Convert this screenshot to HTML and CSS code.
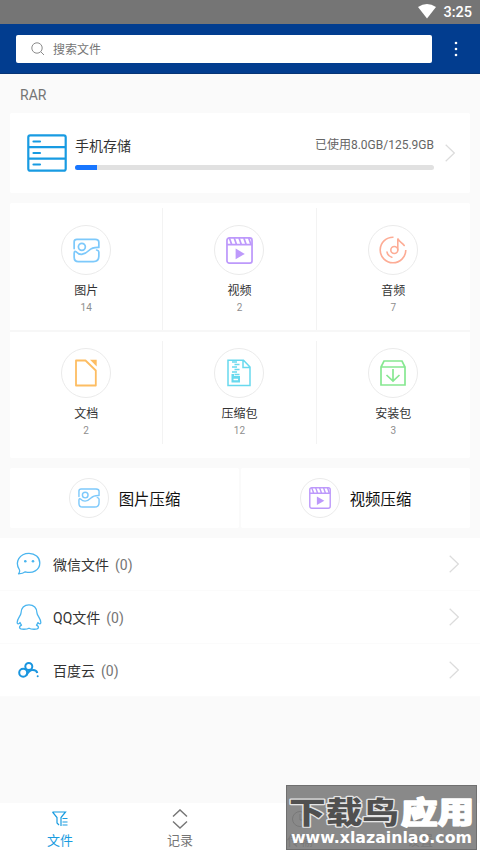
FILE: index.html
```html
<!DOCTYPE html>
<html lang="zh-CN">
<head>
<meta charset="utf-8">
<title>RAR</title>
<link rel="stylesheet" href="styles.css">
</head>
<body>
<svg class="defs" width="0" height="0" aria-hidden="true">
  <symbol id="image" viewBox="0 0 28 28"><g fill="none" stroke="#7dc9fb" stroke-width="1.800" stroke-linecap="round" stroke-linejoin="round"><path d="M1.200 12V5Q1.200 2.500 4 2.500H23Q26.800 2.500 26.800 5.500V10.800Q20 10.500 16.500 14T9 18Q5.500 18 3.500 15.500Q1.200 13.800 1.200 17V21Q1.200 25.500 5.500 25.500H21Q26.800 25.500 26.800 20V15.500Q26.800 14 24.500 13.500"/><circle cx="9.200" cy="10.200" r="3.600"/></g></symbol>
  <symbol id="video" viewBox="0 0 28 28"><g fill="none" stroke="#bd99fb" stroke-width="1.800"><rect x="1" y="1" width="26" height="26" rx="2.500"/><path d="M1 8H27M3.500 1L6 8M8.500 1L11 8M13.500 1L16 8M18.500 1L21 8M23.500 1L26 8"/></g><path d="M10 12L19.500 17.500L10 23Z" fill="#bd99fb"/></symbol>
  <symbol id="chevron" viewBox="0 0 10 18"><path d="M.7.7L9.300 9L.7 17.300" fill="none" stroke="#dcdcdc" stroke-width="1.200"/></symbol>
</svg>

<div class="status">
  <svg width="18" height="15" viewBox="0 0 18 15"><path d="M0 3Q9-3 18 3L9 14.500Z" fill="#fff"/></svg>
  <span>3:25</span>
</div>
<header class="header">
  <div class="search">
    <svg width="14" height="14" viewBox="0 0 14 14" fill="none" stroke="#8b8b8b"><circle cx="6" cy="6" r="5.200"/><path d="M9.800 9.800L13 13"/></svg>
    <span>搜索文件</span>
  </div>
  <svg class="more" width="4" height="16" viewBox="0 0 4 16" fill="#fff"><circle cx="2" cy="2" r="1.300"/><circle cx="2" cy="8" r="1.300"/><circle cx="2" cy="14" r="1.300"/></svg>
</header>

<main>
  <div class="path">RAR</div>
  <section class="card storage">
    <svg width="40" height="38" viewBox="0 0 40 38" fill="none" stroke="#189be2" stroke-width="2.200"><rect x="1.300" y="1.300" width="37.400" height="35.400" rx="2"/><path d="M1 13.200H39M1 24.700H39"/><path d="M6.500 7.500H13M6.500 19H13M6.500 30.500H13" stroke-linecap="round"/></svg>
    <div class="usage">
      <div class="usage-top"><b>手机存储</b><span>已使用8.0GB/125.9GB</span></div>
      <div class="bar"><i></i></div>
    </div>
    <svg class="arrow" width="10" height="18"><use href="#chevron"/></svg>
  </section>

  <section class="card types">
    <div class="row first">
      <div class="type"><div class="disc"><svg width="27" height="27"><use href="#image"/></svg></div><b>图片</b><small>14</small></div>
      <div class="type"><div class="disc"><svg width="27" height="27"><use href="#video"/></svg></div><b>视频</b><small>2</small></div>
      <div class="type"><div class="disc"><svg width="28" height="28" viewBox="0 0 28 28" fill="none" stroke="#fdac95" stroke-width="1.600"><path d="M14.500 1.200A12.800 12.800 0 1 0 26.800 14"/><circle cx="15.300" cy="14" r="3.500"/><path d="M18.800 14V2.500C20 6 23 6.500 25.200 9.500M8 16Q8.500 20 12.800 21.200" stroke-linecap="round"/></svg></div><b>音频</b><small>7</small></div>
    </div>
    <div class="row second">
      <div class="type"><div class="disc"><svg width="24" height="28" viewBox="0 0 24 28"><path d="M2 1.500H11.500L21.800 11.500V26.500H2Z" fill="none" stroke="#fdbd62" stroke-width="1.800" stroke-linejoin="round"/><path d="M16 .7H22.700V7.500Z" fill="#fdbd62"/></svg></div><b>文档</b><small>2</small></div>
      <div class="type"><div class="disc"><svg width="24" height="28" viewBox="0 0 24 28" fill="none" stroke="#68d9ee" stroke-width="1.500"><path d="M1 1.200H16.500L23 8V26.500H1ZM16 1.500V8.500H23"/><path d="M5 3H10M7.500 5.500H12.500M5 8H10M7.500 10.500H12.500M5 13H10M7.500 15.500H12.500" stroke-width="1.700"/><path d="M4.500 15H7V17H13V23.500H4.500Z" fill="#68d9ee" stroke="none"/><path d="M6.500 20.500H11" stroke="#fff"/></svg></div><b>压缩包</b><small>12</small></div>
      <div class="type"><div class="disc"><svg width="26" height="26" viewBox="0 0 26 26" fill="none" stroke="#87e891" stroke-width="1.700"><path d="M1 7L4 1H22L25 7V25H1ZM1 7H25"/><path d="M13 9V21M6.500 15L13 21L19.500 15"/></svg></div><b>安装包</b><small>3</small></div>
    </div>
  </section>

  <section class="compress">
    <div class="card tool"><div class="disc"><svg width="22" height="22"><use href="#image"/></svg></div><span>图片压缩</span></div>
    <div class="card tool"><div class="disc"><svg width="22" height="22"><use href="#video"/></svg></div><span>视频压缩</span></div>
  </section>

  <section class="sources">
    <div class="source">
      <svg width="26" height="26" viewBox="0 0 26 26" fill="none" stroke="#4ab5ef" stroke-width="1.300" stroke-linejoin="round"><path d="M3.300 18.500C-1.500 11 3.500 2.300 13 2.300C19 2.300 23.800 6.500 23.800 12C23.800 19 16.500 23 9.300 20.800C7.500 22.300 5.500 22.800 2.500 22.800Q4.300 20.500 3.300 18.500Z"/><g fill="#4ab5ef" stroke="none"><circle cx="9.300" cy="10.300" r="1.300"/><circle cx="17" cy="10.300" r="1.300"/></g></svg>
      <span>微信文件</span><em>(0)</em><svg class="arrow" width="10" height="18"><use href="#chevron"/></svg>
    </div>
    <div class="source">
      <svg width="26" height="26" viewBox="0 0 26 26" fill="none" stroke="#4ab5ef" stroke-width="1.300" stroke-linejoin="round"><path d="M5 9C5 4 8.300.8 13 .8S21 4 21 9C21 11.500 24.800 14.500 24.800 18.500C24.800 20.500 23 20 22 18.500Q21.800 19.500 20.500 21.200Q23 22.500 22.300 24C21.500 25.700 15 25.500 13 24.200C11 25.500 4.500 25.700 3.700 24Q3 22.500 5.500 21.200Q4.200 19.500 4 18.500C3 20 1.200 20.500 1.200 18.500C1.200 14.500 5 11.500 5 9Z"/></svg>
      <span>QQ文件</span><em>(0)</em><svg class="arrow" width="10" height="18"><use href="#chevron"/></svg>
    </div>
    <div class="source">
      <svg width="26" height="26" viewBox="0 0 26 26" fill="none" stroke="#1995df" stroke-width="2"><circle cx="7.200" cy="15.700" r="4"/><circle cx="12.800" cy="9.500" r="3.500"/><path d="M10.200 18.500Q13.300 13 16.500 13Q20.500 12.800 21.300 16"/><circle cx="21.700" cy="19.200" r="1" fill="#1995df" stroke="none"/></svg>
      <span>百度云</span><em>(0)</em><svg class="arrow" width="10" height="18"><use href="#chevron"/></svg>
    </div>
  </section>
</main>

<nav class="tabs">
  <div class="tab active"><svg width="18" height="20" viewBox="0 0 18 20" fill="none" stroke="currentColor" stroke-width="1.200"><path d="M1.500 3H14.500L10 8.500V17M1.500 3L6 8.500V14L8 16M11.500 9.500H16.500M11.500 13H16.500M11.500 16H16.500"/></svg><span>文件</span></div>
  <div class="tab"><svg width="18" height="20" viewBox="0 0 18 20" fill="none" stroke="currentColor" stroke-width="1.400"><path d="M2 7.500L9 .9L16 7.500M2 12.500L9 19L16 12.500"/></svg><span>记录</span></div>
  <div class="tab"><svg width="18" height="20" viewBox="0 0 18 20" fill="none" stroke="currentColor"><circle cx="9" cy="10" r="7.500"/><path d="M9 5V11H13"/></svg><span>传输</span></div>
  <div class="tab"><svg width="18" height="20" viewBox="0 0 18 20" fill="none" stroke="currentColor"><path d="M9 2L17 6V14L9 18L1 14V6Z"/><circle cx="9" cy="10" r="3"/></svg><span>设置</span></div>
</nav>

<svg class="stamp" width="191" height="65" viewBox="0 0 191 65">
  <rect x=".5" y=".5" width="190" height="64" fill="#777" fill-opacity=".87" stroke="#6f6f6f"/>
  <g class="stamp-name" transform="translate(0 37.500) scale(1 .82)">
    <text class="dark" x="3" y="0" textLength="110" lengthAdjust="spacingAndGlyphs">下载鸟</text>
    <text class="light" x="115" y="0" textLength="73" lengthAdjust="spacingAndGlyphs">应用</text>
  </g>
  <text class="stamp-url" x="5" y="58" textLength="181" lengthAdjust="spacingAndGlyphs">www.xlazainlao.com</text>
</svg>
</body>
</html>
```
FILE: styles.css
```css
* { box-sizing: border-box; }
body {
  margin: 0;
  height: 853px;
  display: flex;
  flex-direction: column;
  overflow: hidden;
  background: #fafafa;
  color: #333;
  font-family: Roboto, "Noto Sans CJK SC", sans-serif;
  font-size: 14px;
}
svg { display: block; flex: none; }
.defs { position: absolute; }
b { font-weight: 400; }
.status {
  height: 24px;
  display: flex;
  justify-content: flex-end;
  align-items: center;
  gap: 7px;
  padding: 0 8px 0 0;
  background: #757575;
  color: #fff;
  font-size: 14.5px;
  font-weight: 500;
}
.status svg { margin-top: -1px; }
.header {
  height: 50px;
  display: flex;
  align-items: center;
  padding: 0 22px 0 16px;
  background: #023d8f;
  border-bottom: 1px solid #073475;
}
.search {
  width: 416px;
  height: 28px;
  display: flex;
  align-items: center;
  gap: 8px;
  padding-left: 15px;
  background: #fff;
  border-radius: 2px;
  color: #757575;
  font-size: 12px;
}
.search span { margin-top: -1px; }
.more { margin-left: auto; }
main { flex: 1; }
.path {
  height: 39px;
  padding: 0 20px;
  line-height: 42px;
  color: #757575;
}
.card { background: #fff; border-radius: 2px; }
.storage {
  height: 80px;
  margin: 0 10px;
  padding: 0 15px 0 17px;
  display: flex;
  align-items: center;
}
.usage { width: 359px; margin: 0 11px 0 8px; }
.usage-top {
  height: 29px;
  display: flex;
  justify-content: space-between;
  line-height: 20px;
}
.usage-top span { color: #666; font-size: 12px; line-height: 18px; }
.bar { height: 5px; border-radius: 3px; background: #e1e1e1; overflow: hidden; }
.bar i { display: block; width: 22px; height: 5px; background: #1876ff; }
.types { height: 255px; margin: 10px 10px 0; }
.row { display: grid; grid-template-columns: repeat(3, 1fr); }
.first { height: 129px; padding-top: 5px; border-bottom: 2px solid #f7f7f7; }
.second { height: 112px; padding-top: 9px; }
.type {
  display: flex;
  flex-direction: column;
  align-items: center;
  border-right: 1px solid #f3f3f3;
}
.type:last-child { border-right: 0; }
.first .type { padding-top: 17px; }
.second .type { padding-top: 7px; }
.disc {
  width: 50px;
  height: 50px;
  display: flex;
  flex: none;
  align-items: center;
  justify-content: center;
  border: 1px solid #ebebeb;
  border-radius: 50%;
}
.type b { margin-top: 7px; font-size: 12px; line-height: 18px; }
.type small { font-size: 10px; line-height: 12px; margin-top: 2px; color: #8e8e8e; }
.compress {
  display: grid;
  grid-template-columns: 1fr 1fr;
  gap: 2px;
  padding: 10px;
}
.tool {
  height: 60px;
  display: flex;
  align-items: center;
  justify-content: center;
  gap: 10px;
  color: #111;
  font-size: 15.4px;
}
.tool .disc { width: 40px; height: 40px; }
.sources { background: #fff; height: 158px; }
.source {
  height: 53px;
  display: flex;
  align-items: center;
  padding: 0 21px 0 16px;
  border-bottom: 1px solid #fbfbfb;
}
.source span { margin-left: 11px; margin-top: -1px; }
.source em { margin-left: 6px; padding-top: 1px; color: #757575; font-style: normal; }
.source .arrow { margin-left: auto; }
.tabs {
  height: 50px;
  display: grid;
  grid-template-columns: repeat(4, 1fr);
  background: #fff;
  color: #757575;
}
.tab {
  display: flex;
  flex-direction: column;
  align-items: center;
  padding-top: 6px;
  font-size: 13px;
  line-height: 20px;
}
.tab span { margin-top: 2px; }
.active { color: #199ce0; }
.stamp { position: absolute; left: 286px; top: 785px; }
.stamp-name {
  font: 900 36px "Noto Sans CJK SC", sans-serif;
  paint-order: stroke;
  stroke-linejoin: round;
}
.dark { fill: #505050; stroke: #e4e4e4; stroke-width: 3px; }
.light { fill: #fff; stroke: #fff; stroke-width: 2px; }
.stamp-url { font: 700 16px "DejaVu Sans", sans-serif; fill: #fff; }
```
